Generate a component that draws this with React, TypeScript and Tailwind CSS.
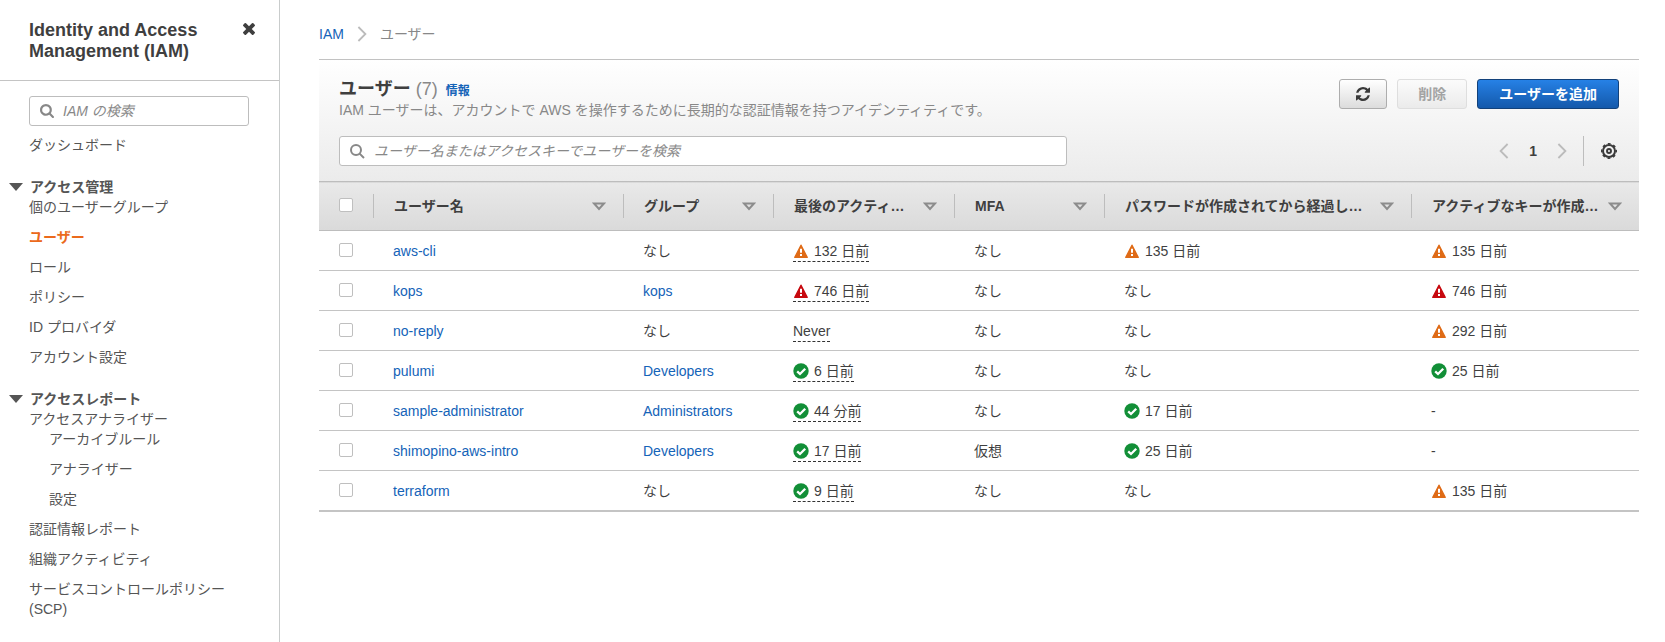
import { useState, type ReactNode } from "react";

type Level = "ok" | "warn" | "alert";
type Status = { level?: Level; text: string };
type User = {
  name: string;
  group?: string;
  activity: Status;
  mfa: string;
  password: Status;
  key: Status;
};

const NONE = "なし";

const users: User[] = [
  { name: "aws-cli", activity: { level: "warn", text: "132 日前" }, mfa: NONE, password: { level: "warn", text: "135 日前" }, key: { level: "warn", text: "135 日前" } },
  { name: "kops", group: "kops", activity: { level: "alert", text: "746 日前" }, mfa: NONE, password: { text: NONE }, key: { level: "alert", text: "746 日前" } },
  { name: "no-reply", activity: { text: "Never" }, mfa: NONE, password: { text: NONE }, key: { level: "warn", text: "292 日前" } },
  { name: "pulumi", group: "Developers", activity: { level: "ok", text: "6 日前" }, mfa: NONE, password: { text: NONE }, key: { level: "ok", text: "25 日前" } },
  { name: "sample-administrator", group: "Administrators", activity: { level: "ok", text: "44 分前" }, mfa: NONE, password: { level: "ok", text: "17 日前" }, key: { text: "-" } },
  { name: "shimopino-aws-intro", group: "Developers", activity: { level: "ok", text: "17 日前" }, mfa: "仮想", password: { level: "ok", text: "25 日前" }, key: { text: "-" } },
  { name: "terraform", activity: { level: "ok", text: "9 日前" }, mfa: NONE, password: { text: NONE }, key: { level: "warn", text: "135 日前" } },
];

const columns = ["ユーザー名", "グループ", "最後のアクティ…", "MFA", "パスワードが作成されてから経過し…", "アクティブなキーが作成…"];

function SearchBoldIcon() {
  return (
    <svg viewBox="64 128 1664 1664" className="size-[14px]" fill="currentColor" aria-hidden="true">
      <path d="M1216 832q0-185-131.5-316.5t-316.5-131.5-316.5 131.5-131.5 316.5 131.5 316.5 316.5 131.5 316.5-131.5 131.5-316.5zm512 832q0 52-38 90t-90 38q-54 0-90-38l-343-342q-179 124-399 124-143 0-273.5-55.5t-225-150-150-225-55.5-273.5 55.5-273.5 150-225 225-150 273.5-55.5 273.5 55.5 225 150 150 225 55.5 273.5q0 220-124 399l343 343q37 37 37 90z" />
    </svg>
  );
}

function SearchIcon() {
  return (
    <svg viewBox="0 0 16 16" className="-ml-px size-4" fill="none" stroke="currentColor" strokeWidth="2" aria-hidden="true">
      <circle cx="7" cy="7" r="5" />
      <path d="M10.6 10.6 15 15" />
    </svg>
  );
}

function CloseIcon() {
  return (
    <svg viewBox="302 366 1188 1188" className="size-3" fill="currentColor" aria-hidden="true">
      <path d="M1490 1322q0 40-28 68l-136 136q-28 28-68 28t-68-28l-294-294-294 294q-28 28-68 28t-68-28l-136-136q-28-28-28-68t28-68l294-294-294-294q-28-28-28-68t28-68l136-136q28-28 68-28t68 28l294 294 294-294q28-28 68-28t68 28l136 136q28 28 28 68t-28 68l-294 294 294 294q28 28 28 68z" />
    </svg>
  );
}

function RefreshIcon() {
  return (
    <svg viewBox="0 0 1536 1536" className="size-[14px]" fill="currentColor" aria-hidden="true">
      <path d="M1511 928q0 5-1 7-64 268-268 434.5t-478 166.5q-146 0-282.5-55t-243.5-157l-129 129q-19 19-45 19t-45-19-19-45v-448q0-26 19-45t45-19h448q26 0 45 19t19 45-19 45l-137 137q71 66 161 102t187 36q134 0 250-65t186-179q11-17 53-117 8-23 30-23h192q13 0 22.5 9.5t9.5 22.5zm25-800v448q0 26-19 45t-45 19h-448q-26 0-45-19t-19-45 19-45l138-138q-148-137-349-137-134 0-250 65t-186 179q-11 17-53 117-8 23-30 23h-199q-13 0-22.5-9.5t-9.5-22.5v-7q65-268 270-434.5t480-166.5q146 0 284 55.5t245 156.5l130-129q19-19 45-19t45 19 19 45z" />
    </svg>
  );
}

function GearIcon() {
  return (
    <svg viewBox="0 0 16 16" className="size-4" fill="none" stroke="currentColor" aria-hidden="true">
      <circle cx="8" cy="8" r="6" strokeWidth="2" />
      <circle cx="8" cy="8" r="7.3" strokeWidth="1.4" strokeDasharray="2.9 2.833" strokeDashoffset="1.45" />
      <circle cx="8" cy="8" r="2" strokeWidth="1.9" />
    </svg>
  );
}

function Chevron({ left = false }: { left?: boolean }) {
  return (
    <svg viewBox="0 0 10 16" className="h-4 w-[10px]" fill="none" stroke="currentColor" strokeWidth="1.8" aria-hidden="true">
      <path d={left ? "M8.6 1 1.6 8l7 7" : "M1.4 1l7 7-7 7"} />
    </svg>
  );
}

function SortIcon() {
  return (
    <svg viewBox="0 0 14 9" className="h-[9px] w-[14px] shrink-0 text-[#8c8c8c]" fill="none" stroke="currentColor" strokeWidth="2" aria-hidden="true">
      <path d="M2 1.4h10L7 7z" />
    </svg>
  );
}

function StatusIcon({ level }: { level: Level }) {
  if (level === "ok") {
    return (
      <svg viewBox="0 0 16 16" className="size-4 shrink-0" aria-hidden="true">
        <circle cx="8" cy="8" r="7.7" fill="#128f37" />
        <path d="M4.2 8.3 7 11l5.2-5.3" fill="none" stroke="#fff" strokeWidth="2.3" />
      </svg>
    );
  }
  return (
    <svg viewBox="0 0 16 16" className={level === "warn" ? "size-4 shrink-0 text-[#df6b17]" : "size-4 shrink-0 text-[#c7090f]"} aria-hidden="true">
      <path d="M8 2.2 14.2 14.4H1.8z" fill="currentColor" stroke="currentColor" strokeWidth="1.4" strokeLinejoin="round" />
      <path d="M7 5.8h2v4H7zM7 11h2v2H7z" fill="#fff" />
    </svg>
  );
}

function StatusText({ status, dashed = false }: { status: Status; dashed?: boolean }) {
  return (
    <div className="flex">
      <span className={dashed ? "flex items-center gap-[5px] border-b border-dashed border-[#333]" : "flex items-center gap-[5px]"}>
        {status.level && <StatusIcon level={status.level} />}
        <span>{status.text}</span>
      </span>
    </div>
  );
}

function NavLink({ children, current = false }: { children: ReactNode; current?: boolean }) {
  return (
    <a href="#" aria-current={current ? "page" : undefined} className={current ? "block font-bold text-[#eb6a1c]" : "block"}>
      {children}
    </a>
  );
}

function NavGroup({ title, children }: { title: string; children: ReactNode }) {
  const [open, setOpen] = useState(true);
  return (
    <section className="mt-[22px]">
      <button type="button" aria-expanded={open} onClick={() => setOpen(!open)} className="flex items-center gap-[7px] pl-[9px] font-bold">
        <svg viewBox="0 0 14 8" className="h-2 w-[14px]" fill="currentColor" aria-hidden="true">
          <path d="M0 0h14L7 8z" />
        </svg>
        {title}
      </button>
      {open && <div className="flex flex-col gap-[10px] pr-5 pl-[29px]">{children}</div>}
    </section>
  );
}

function Checkbox({ label, checked, onChange }: { label: string; checked: boolean; onChange: () => void }) {
  return (
    <input
      type="checkbox"
      aria-label={label}
      checked={checked}
      onChange={onChange}
      className="block size-[14px] appearance-none rounded-[2px] border border-[#bfbfbf] bg-white checked:border-[#1463b8] checked:bg-[#1463b8]"
    />
  );
}

function Cell({ children }: { children: ReactNode }) {
  return <td className="pt-[10px] pl-5 align-top">{children}</td>;
}

function Sidebar() {
  return (
    <aside className="w-[280px] shrink-0 border-r border-[#c9cccc] pb-5 text-[#555]">
      <header className="flex items-start justify-between border-b border-[#c4c4c4] pt-5 pr-6 pb-[18px] pl-[29px] text-[#3f3f3f]">
        <h2 className="w-[180px] text-lg leading-[21px] font-bold">Identity and Access Management (IAM)</h2>
        <button type="button" aria-label="閉じる" className="pt-[3px]">
          <CloseIcon />
        </button>
      </header>
      <nav>
        <label className="mt-[15px] mr-[30px] ml-[29px] flex h-[30px] items-center gap-[9px] rounded-[3px] border border-[#bdbdbd] bg-white px-[10px] text-[#888]">
          <SearchBoldIcon />
          <input type="search" aria-label="IAM の検索" placeholder="IAM の検索" className="min-w-0 flex-1 outline-none placeholder:text-[#888] placeholder:italic" />
        </label>
        <div className="mt-[9px] pl-[29px]">
          <NavLink>ダッシュボード</NavLink>
        </div>
        <NavGroup title="アクセス管理">
          <NavLink>個のユーザーグループ</NavLink>
          <NavLink current>ユーザー</NavLink>
          <NavLink>ロール</NavLink>
          <NavLink>ポリシー</NavLink>
          <NavLink>ID プロバイダ</NavLink>
          <NavLink>アカウント設定</NavLink>
        </NavGroup>
        <NavGroup title="アクセスレポート">
          <div>
            <NavLink>アクセスアナライザー</NavLink>
            <div className="flex flex-col gap-[10px] pl-5">
              <NavLink>アーカイブルール</NavLink>
              <NavLink>アナライザー</NavLink>
              <NavLink>設定</NavLink>
            </div>
          </div>
          <NavLink>認証情報レポート</NavLink>
          <NavLink>組織アクティビティ</NavLink>
          <NavLink>サービスコントロールポリシー (SCP)</NavLink>
        </NavGroup>
      </nav>
    </aside>
  );
}

function PanelHeader() {
  return (
    <div className="px-5 pt-[19px] pb-[15px]">
      <div className="flex items-start justify-between gap-5">
        <div>
          <div className="flex h-[21px] items-baseline">
            <h1 className="text-lg leading-[21px] font-bold text-[#3f3f3f]">
              ユーザー <span className="font-normal text-[#888]">(7)</span>
            </h1>
            <a href="#" className="ml-2 text-xs leading-4 font-bold text-[#1463b8]">
              情報
            </a>
          </div>
          <p className="text-[#888]">IAM ユーザーは、アカウントで AWS を操作するために長期的な認証情報を持つアイデンティティです。</p>
        </div>
        <div className="flex shrink-0 gap-[10px] font-bold">
          <button type="button" aria-label="更新" className="flex h-[30px] items-center rounded-[3px] border border-[#adadad] bg-linear-to-b from-white to-[#dcdcdc] px-4 text-[#3a3a3a]">
            <RefreshIcon />
          </button>
          <button type="button" disabled className="h-[30px] rounded-[3px] border border-[#dedede] bg-linear-to-b from-[#fbfbfb] to-[#ebebeb] px-5 text-[#a3a3a3]">
            削除
          </button>
          <button type="button" className="h-[30px] rounded-[3px] border border-[#12417a] bg-linear-to-b from-[#2681e6] to-[#1459ab] px-[21px] text-white">
            ユーザーを追加
          </button>
        </div>
      </div>
      <div className="mt-4 flex items-center justify-between gap-5">
        <label className="flex h-[30px] w-[728px] items-center gap-[9px] rounded-[3px] border border-[#bdbdbd] bg-white px-[10px] text-[#888]">
          <SearchIcon />
          <input type="search" aria-label="ユーザーを検索" placeholder="ユーザー名またはアクセスキーでユーザーを検索" className="min-w-0 flex-1 outline-none placeholder:text-[#888] placeholder:italic" />
        </label>
        <div className="flex items-center">
          <div className="flex items-center gap-5 pr-4 text-[#bbb]">
            <button type="button" aria-label="前のページ">
              <Chevron left />
            </button>
            <button type="button" aria-current="page" className="font-bold text-[#3f3f3f]">
              1
            </button>
            <button type="button" aria-label="次のページ">
              <Chevron />
            </button>
          </div>
          <div className="flex h-[30px] items-center border-l border-[#bdbdbd] pr-[2px] pl-[17px]">
            <button type="button" aria-label="設定" className="text-[#3a3a3a]">
              <GearIcon />
            </button>
          </div>
        </div>
      </div>
    </div>
  );
}

export default function App() {
  const [selected, setSelected] = useState<string[]>([]);
  const toggle = (name: string) => setSelected(selected.includes(name) ? selected.filter((n) => n !== name) : [...selected, name]);
  const all = selected.length === users.length;

  return (
    <div className="flex min-h-screen bg-white font-['Liberation_Sans','Noto_Sans_CJK_JP',sans-serif] text-sm leading-5 text-[#3f3f3f]" lang="ja">
      <Sidebar />
      <main className="min-w-0 flex-1 pt-6 pr-[26px] pl-[39px]">
        <nav aria-label="パンくずリスト" className="flex items-center gap-[13px]">
          <a href="#" className="text-[#1463b8]">
            IAM
          </a>
          <span className="text-[#bbb]">
            <Chevron />
          </span>
          <span className="text-[#888]">ユーザー</span>
        </nav>
        <div className="mt-[15px] border-t border-[#c2c2c2] bg-linear-to-b from-white to-[#ebebeb] to-[122px]">
          <PanelHeader />
          <table className="w-full table-fixed border-collapse bg-white text-left">
            <colgroup>
              <col className="w-[54px]" />
              <col className="w-[250px]" />
              <col className="w-[150px]" />
              <col className="w-[181px]" />
              <col className="w-[150px]" />
              <col className="w-[307px]" />
              <col />
            </colgroup>
            <thead>
              <tr className="h-[49px] border-y border-[#bdbdbd] bg-linear-to-b from-[#e9e9e9] to-[#dadada]">
                <th className="pt-4 pl-5 align-top">
                  <Checkbox label="すべて選択" checked={all} onChange={() => setSelected(all ? [] : users.map((u) => u.name))} />
                </th>
                {columns.map((column) => (
                  <th key={column} className="p-0">
                    <button type="button" className="flex h-6 w-full items-center justify-between border-l border-[#bdbdbd] pr-[17px] pl-5 font-bold whitespace-nowrap">
                      {column}
                      <SortIcon />
                    </button>
                  </th>
                ))}
              </tr>
            </thead>
            <tbody className="border-b-2 border-[#c4c4c4]">
              {users.map((user) => (
                <tr key={user.name} className="h-10 border-b border-[#c4c4c4] last:border-b-0">
                  <td className="pt-3 pl-5 align-top">
                    <Checkbox label={user.name} checked={selected.includes(user.name)} onChange={() => toggle(user.name)} />
                  </td>
                  <Cell>
                    <a href="#" className="text-[#1463b8]">
                      {user.name}
                    </a>
                  </Cell>
                  <Cell>
                    {user.group ? (
                      <a href="#" className="text-[#1463b8]">
                        {user.group}
                      </a>
                    ) : (
                      NONE
                    )}
                  </Cell>
                  <Cell>
                    <StatusText status={user.activity} dashed />
                  </Cell>
                  <Cell>{user.mfa}</Cell>
                  <Cell>
                    <StatusText status={user.password} />
                  </Cell>
                  <Cell>
                    <StatusText status={user.key} />
                  </Cell>
                </tr>
              ))}
            </tbody>
          </table>
        </div>
      </main>
    </div>
  );
}
